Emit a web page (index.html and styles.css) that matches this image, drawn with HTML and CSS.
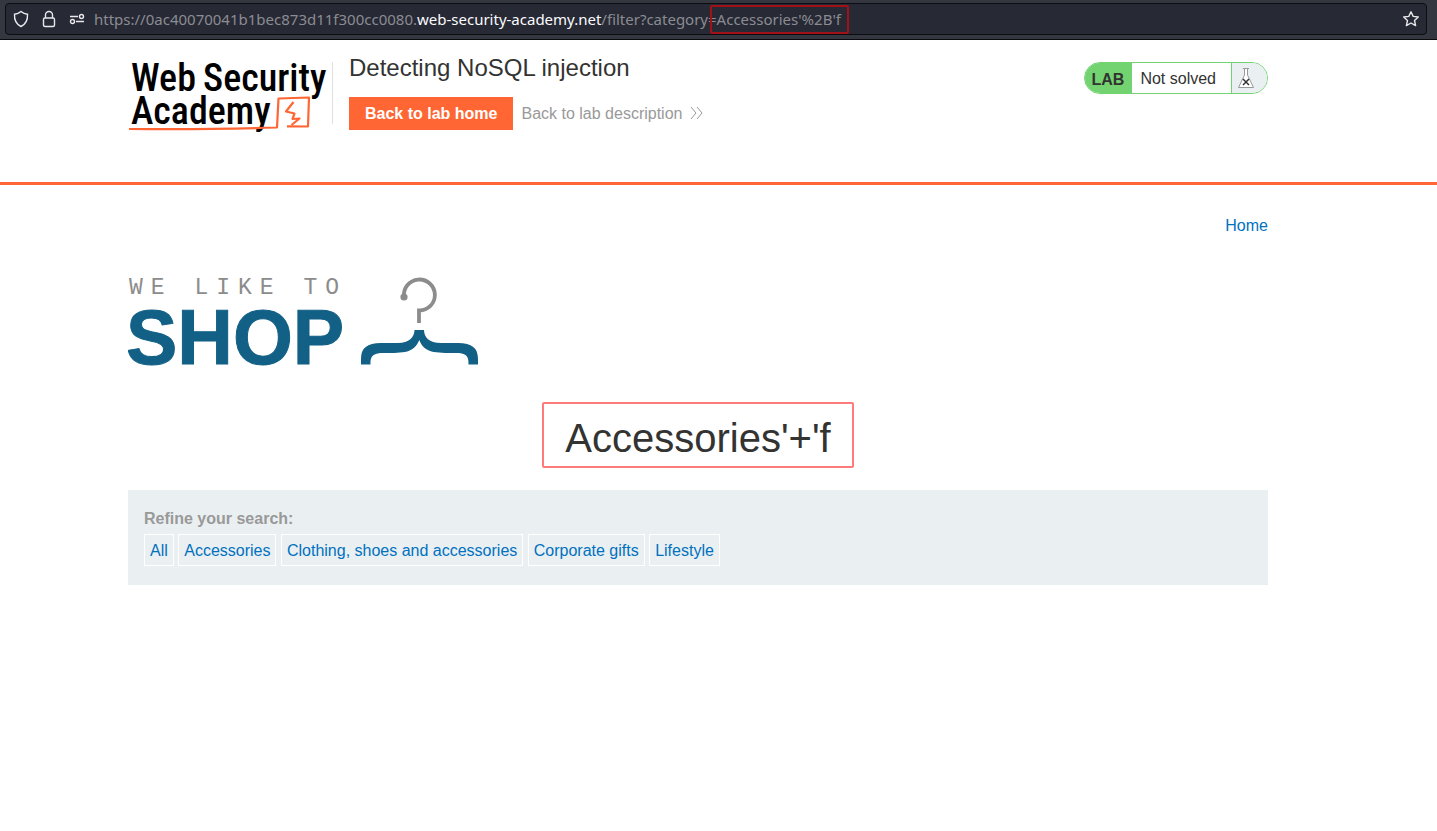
FILE: index.html
```html
<!DOCTYPE html>
<html lang="en">
<head>
<meta charset="utf-8">
<title>Detecting NoSQL injection</title>
<link rel="stylesheet" href="styles.css">
</head>
<body>
<div class="toolbar">
  <div class="address">
    <button class="tool" aria-label="Tracking protection"><svg width="16" height="18" viewBox="0 0 16 18"><path d="M8 1.500C6 3.200 3.800 4 1.500 4.200C1.200 9.500 3 14 8 16.500C13 14 14.800 9.500 14.500 4.200C12.200 4 10 3.200 8 1.500Z"/></svg></button>
    <button class="tool" aria-label="Site security"><svg width="16" height="18" viewBox="0 0 16 18"><rect x="2.500" y="8" width="11" height="8.500" rx="1.500"/><path d="M4.500 8V5a3.500 3.500 0 0 1 7 0V8"/></svg></button>
    <button class="tool" aria-label="Permissions"><svg width="16" height="18" viewBox="0 0 16 18"><path d="M1 6.500H9M7 11.500H15"/><circle cx="12.500" cy="6.500" r="2"/><circle cx="3.500" cy="11.500" r="2"/></svg></button>
    <div class="url">https://0ac40070041b1bec873d11f300cc0080.<span class="host">web-security-academy.net</span>/filter?category=<span class="marked">Accessories'%2B'f</span></div>
    <button class="tool" aria-label="Bookmark this page"><svg width="18" height="18" viewBox="0 0 18 18"><path d="M9 1.800L11.200 6.400L16.300 7L12.500 10.500L13.600 15.600L9 13L4.400 15.600L5.500 10.500L1.700 7L6.800 6.400Z" stroke-linejoin="round"/></svg></button>
  </div>
</div>
<header class="lab-header">
  <a class="academy" href="#" aria-label="Web Security Academy">
    <svg width="204" height="74" viewBox="0 0 204 74">
      <g class="wordmark"><text x="3" y="31">Web</text><text x="75" y="31">Security</text><text x="3" y="64">Academy</text></g>
      <g fill="none" stroke="#ff6633" stroke-linejoin="round"><path d="M1 69Q80 69.800 149 67.500L150.500 38.500L181 37.500L180 66.500L159 66.300" stroke-width="2.200"/><path d="M165.500 42L158 51.500L166.500 53.500L164.500 59L171.500 58.500L163.500 65" stroke-width="2.200"/></g>
    </svg>
  </a>
  <div class="lab-title">
    <h2>Detecting NoSQL injection</h2>
    <div class="lab-links">
      <a class="home-button" href="#">Back to lab home</a>
      <a class="description" href="#">Back to lab description <svg width="13" height="12" viewBox="0 0 13 12"><path d="M1 0L6 6L1 12M7 0L12 6L7 12"/></svg></a>
    </div>
  </div>
  <div class="status">
    <span class="status-lab">LAB</span>
    <span class="status-text">Not solved</span>
    <span class="status-icon"><svg width="18" height="22" viewBox="0 0 18 22"><path d="M6 1.500H12M7.500 2V8L1.500 20.500H16.500L10.500 8V2" fill="#fff" stroke="#999"/><path d="M6 12L12 18M12 12L6 18" stroke="#333" stroke-width="1.500"/></svg></span>
  </div>
</header>
<main class="shop">
  <nav class="top-links"><a href="#">Home</a></nav>
  <svg class="shop-logo" width="351" height="92" viewBox="0 0 351 92" role="img" aria-label="We like to shop">
    <text class="logo-small" x="1" y="18">WE LIKE TO</text>
    <text class="logo-big" x="-2" y="88">SHOP</text>
    <path d="M276 21A15.500 15.500 0 1 1 291 34.500V47" fill="none" stroke="#8c8c8c" stroke-width="3.800"/>
    <circle cx="276" cy="21" r="3.600" fill="#8c8c8c"/>
    <path d="M286.500 54H296C296 61 301 67 313 67H330C344 67 350 72 350 83V88.500H340.500C341 79 337 77 328 77C307 77 296 77 291.300 64C286 77 276 77 256 77C246 77 242 79 242.500 88.500H233V83C233 72 239 67 253 67H270C281 67 286.500 61 286.500 54Z" fill="#136086"/>
  </svg>
  <h1>Accessories'+'f</h1>
  <section class="filters">
    <h3>Refine your search:</h3>
    <a href="#">All</a>
    <a href="#">Accessories</a>
    <a href="#">Clothing, shoes and accessories</a>
    <a href="#">Corporate gifts</a>
    <a href="#">Lifestyle</a>
  </section>
</main>
</body>
</html>
```
FILE: styles.css
```css
* { box-sizing: border-box; }
body { margin: 0; background: #fff; color: #333332; font: 16px/20px "Liberation Sans", Arial, sans-serif; }
a { color: #0071bf; text-decoration: none; }
h1, h2, h3 { margin: 0; }

.toolbar { height: 40px; padding: 3px 10px 4px 5px; background: #343640; border-bottom: 1px solid #0b0b0f; }
.address { display: flex; align-items: center; gap: 12px; height: 32px; padding: 0 6px 0 7px; background: #272935; border: 1px solid #0b0d12; border-radius: 4px; }
.tool { display: flex; padding: 0; border: 0; background: none; }
.tool svg { fill: none; stroke: #e8e8ec; stroke-width: 1.4; }
.url { flex: 1; margin-left: -3px; color: #8b8c92; font: 15px/20px "Noto Sans", sans-serif; white-space: nowrap; }
.host { color: #fbfbfe; }
.marked { position: relative; }
.marked::after { content: ""; position: absolute; inset: -4px -8px -5px -7px; border: 2px solid #a11218; border-radius: 2px; }

.lab-header { display: flex; height: 145px; padding: 20px 169px 0 128px; border-bottom: 3px solid #ff6633; }
.academy { height: 74px; }
.academy svg { display: block; }
.wordmark { font: 500 38px "Roboto Condensed", Roboto, sans-serif; fill: #000; }
.lab-title { position: relative; flex: 1; padding-left: 17px; }
.lab-title::before { content: ""; position: absolute; left: 0; top: 2px; width: 1px; height: 62px; background: #e0e0e0; }
.lab-title h2 { padding-bottom: 21px; font-size: 24px; line-height: 16px; font-weight: 400; }
.lab-links { display: flex; gap: 8px; line-height: 33px; }
.home-button { padding: 0 16px; background: #ff6633; color: #fff; font-weight: 700; }
.description { color: #999; }
.description svg { margin-left: 3px; fill: none; stroke: #999; vertical-align: 0; }
.status { display: flex; height: 32px; margin-top: 2px; border: 1px solid #72d370; border-radius: 16px; overflow: hidden; line-height: 31px; }
.status-lab { padding: 1px 8px 0 7px; background: #72d370; font-weight: 700; }
.status-text { padding: 0 15px 0 8px; }
.status-icon { display: flex; align-items: center; width: 36px; padding-left: 5px; background: #eaeff2; border-left: 1px solid #72d370; }
.status-icon svg { fill: none; }

.shop { padding: 31px 169px 0 128px; }
.top-links { text-align: right; }
.shop-logo { display: block; margin-top: 40px; }
.logo-small { font: 23px "Liberation Mono", monospace; letter-spacing: 8px; fill: #8c8c8c; }
.logo-big { font: 700 77px "Liberation Sans", Arial, sans-serif; fill: #136086; stroke: #136086; stroke-width: 1; }
.shop h1 { width: 312px; height: 66px; margin: 34px auto 22px; padding-top: 4px; border: 2px solid #ff7b7b; border-radius: 2px; font-size: 40px; line-height: 60px; font-weight: 400; text-align: center; }
.filters { padding: 19px 16px; background: #eaeff2; }
.filters h3 { padding-bottom: 5px; color: #999; font-size: 16px; }
.filters a { display: inline-block; padding: 1px 5px 0; border: 1px solid #fff; line-height: 29px; vertical-align: top; }
```
